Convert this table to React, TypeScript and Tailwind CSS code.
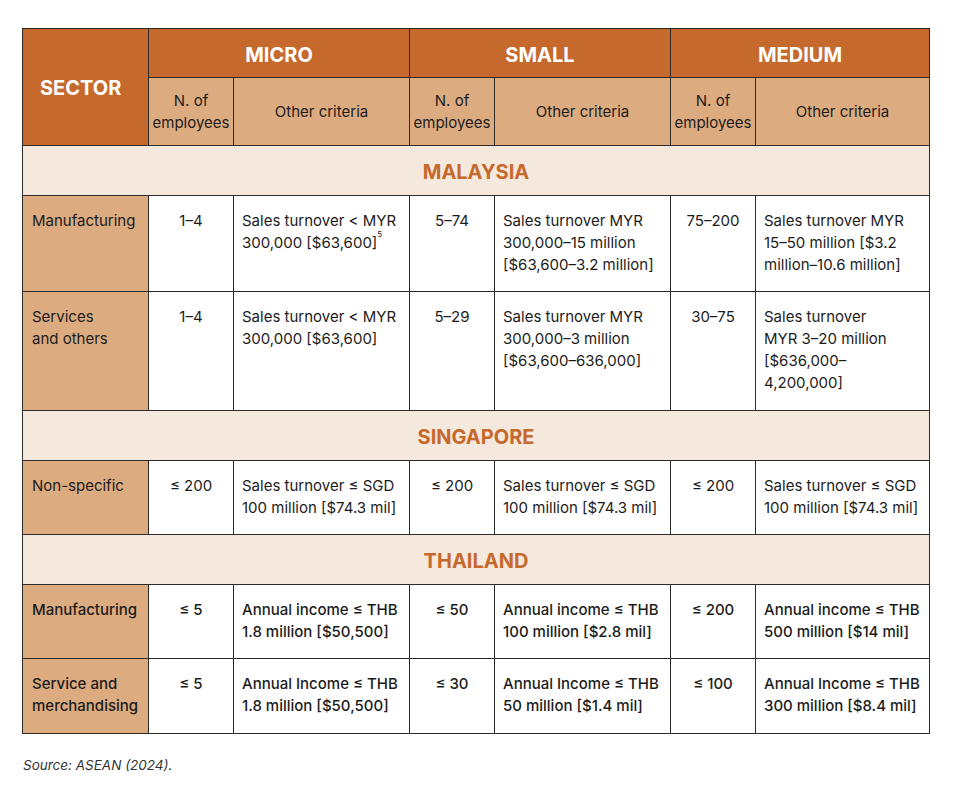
import type { ReactNode } from 'react';

type Row = {
  sector: string[];
  cells: ReactNode[][];
  height: string;
};

type Section = {
  country: string;
  strong?: boolean;
  rows: Row[];
};

const sections: Section[] = [
  {
    country: 'MALAYSIA',
    rows: [
      {
        sector: ['Manufacturing'],
        height: 'h-[96px]',
        cells: [
          ['1–4'],
          [
            'Sales turnover < MYR',
            <>
              300,000 [$63,600]<sup className="text-[8px] align-[7px]">5</sup>
            </>,
          ],
          ['5–74'],
          ['Sales turnover MYR', '300,000–15 million', '[$63,600–3.2 million]'],
          ['75–200'],
          ['Sales turnover MYR', '15–50 million [$3.2', 'million–10.6 million]'],
        ],
      },
      {
        sector: ['Services', 'and others'],
        height: 'h-[119px]',
        cells: [
          ['1–4'],
          ['Sales turnover < MYR', '300,000 [$63,600]'],
          ['5–29'],
          ['Sales turnover MYR', '300,000–3 million', '[$63,600–636,000]'],
          ['30–75'],
          ['Sales turnover', 'MYR 3–20 million', '[$636,000–', '4,200,000]'],
        ],
      },
    ],
  },
  {
    country: 'SINGAPORE',
    rows: [
      {
        sector: ['Non-specific'],
        height: 'h-[74px]',
        cells: [
          ['≤ 200'],
          ['Sales turnover ≤ SGD', '100 million [$74.3 mil]'],
          ['≤ 200'],
          ['Sales turnover ≤ SGD', '100 million [$74.3 mil]'],
          ['≤ 200'],
          ['Sales turnover ≤ SGD', '100 million [$74.3 mil]'],
        ],
      },
    ],
  },
  {
    country: 'THAILAND',
    strong: true,
    rows: [
      {
        sector: ['Manufacturing'],
        height: 'h-[74px]',
        cells: [
          ['≤ 5'],
          ['Annual income ≤ THB', '1.8 million [$50,500]'],
          ['≤ 50'],
          ['Annual income ≤ THB', '100 million [$2.8 mil]'],
          ['≤ 200'],
          ['Annual income ≤ THB', '500 million [$14 mil]'],
        ],
      },
      {
        sector: ['Service and', 'merchandising'],
        height: 'h-[75px]',
        cells: [
          ['≤ 5'],
          ['Annual Income ≤ THB', '1.8 million [$50,500]'],
          ['≤ 30'],
          ['Annual Income ≤ THB', '50 million [$1.4 mil]'],
          ['≤ 100'],
          ['Annual Income ≤ THB', '300 million [$8.4 mil]'],
        ],
      },
    ],
  },
];

const sizes = ['MICRO', 'SMALL', 'MEDIUM'];

function Lines({ lines }: { lines: ReactNode[] }) {
  return (
    <>
      {lines.map((l, i) => (
        <span key={i} className="block whitespace-nowrap">
          {l}
        </span>
      ))}
    </>
  );
}

export default function App() {
  return (
    <div className="min-h-screen bg-white pt-[28px] pl-[22px] font-['Inter',sans-serif] text-[#1c1c1c]">
      <table className="table-fixed border-collapse border border-[#2e2a27] w-[907px] text-[15px] leading-[22px]">
        <colgroup>
          <col className="w-[126px]" />
          <col className="w-[85px]" />
          <col className="w-[176px]" />
          <col className="w-[85px]" />
          <col className="w-[176px]" />
          <col className="w-[85px]" />
          <col className="w-[174px]" />
        </colgroup>
        <thead>
          <tr className="h-[49px]">
            <th
              rowSpan={2}
              className="border border-[#2e2a27] bg-[#c5692d] text-left pl-[17px] pt-[2px] text-[20px] font-bold text-white align-middle"
            >
              SECTOR
            </th>
            {sizes.map((s) => (
              <th
                key={s}
                colSpan={2}
                className="border border-[#2e2a27] bg-[#c5692d] pt-[3px] text-[20px] font-bold text-white text-center"
              >
                {s}
              </th>
            ))}
          </tr>
          <tr className="h-[68px]">
            {sizes.map((s) => (
              <>
                <th key={s + 'n'} className="border border-[#2e2a27] bg-[#ddab80] font-normal text-center px-0">
                  N. of
                  <br />
                  employees
                </th>
                <th key={s + 'o'} className="border border-[#2e2a27] bg-[#ddab80] font-normal text-center">
                  Other criteria
                </th>
              </>
            ))}
          </tr>
        </thead>
        <tbody>
          {sections.map((sec) => (
            <>
              <tr key={sec.country} className="h-[50px]">
                <td
                  colSpan={7}
                  className="border border-[#2e2a27] bg-[#f5e8dd] pt-[3px] text-center text-[20px] font-bold text-[#c5692d]"
                >
                  {sec.country}
                </td>
              </tr>
              {sec.rows.map((row, ri) => (
                <tr key={sec.country + ri} className={`${row.height} ${sec.strong ? 'font-medium' : ''}`}>
                  <td className="border border-[#2e2a27] bg-[#ddab80] align-top pt-[14px] pl-[9px]">
                    <Lines lines={row.sector} />
                  </td>
                  {row.cells.map((c, ci) => (
                    <td
                      key={ci}
                      className={`border border-[#2e2a27] align-top pt-[14px] ${
                        ci % 2 === 0 ? 'text-center' : 'text-left pl-[8px]'
                      }`}
                    >
                      <Lines lines={c} />
                    </td>
                  ))}
                </tr>
              ))}
            </>
          ))}
        </tbody>
      </table>
      <p className="mt-[21px] pl-[1px] text-[13.5px] italic text-[#333]">Source: ASEAN (2024).</p>
    </div>
  );
}
